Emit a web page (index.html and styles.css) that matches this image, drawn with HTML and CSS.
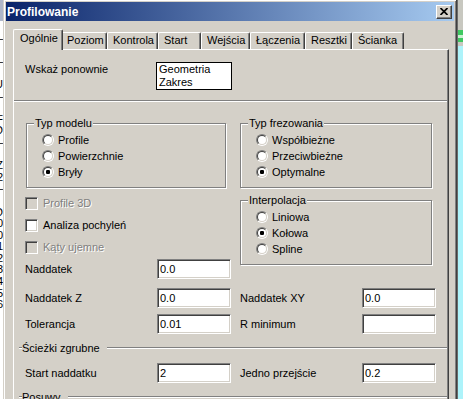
FILE: index.html
```html
<!DOCTYPE html>
<html lang="pl">
<head>
<meta charset="utf-8">
<title>Profilowanie</title>
<link rel="stylesheet" href="styles.css">
</head>
<body>
<div class="screen">
  <div class="strip-left">
    <div class="sl-top"></div>
    <div class="sl-text">
      <div class="sl-inner">&nbsp;<br>–<br>&nbsp;<br>–<br>&nbsp;<br>U<br>–<br>&nbsp;<br>F<br>D<br>–<br>&nbsp;<br>Z<br>2<br>–<br>&nbsp;<br>D<br>0<br>0<br>1<br>2<br>3<br>4<br>5<br>6</div>
    </div>
  </div>
  <div class="window">
    <div class="titlebar">
      <span class="title">Profilowanie</span>
      <span class="close"><svg width="8" height="7" viewBox="0 0 8 7"><path d="M0.5 0 L7.5 7 M7.5 0 L0.5 7" stroke="#000" stroke-width="1.7" fill="none"/></svg></span>
    </div>
    <div class="tabs">
      <div class="tab active t-ogolnie">Ogólnie</div>
      <div class="tab t-poziom">Poziom</div>
      <div class="tab t-kontrola">Kontrola</div>
      <div class="tab t-start">Start</div>
      <div class="tab t-wejscia">Wejścia</div>
      <div class="tab t-laczenia">Łączenia</div>
      <div class="tab t-resztki">Resztki</div>
      <div class="tab t-scianka">Ścianka</div>
    </div>
    <div class="panel">
      <div class="row-top">
        <span class="lbl-wide">Wskaż ponownie</span>
        <div class="listbox"><div>Geometria</div><div>Zakres</div></div>
      </div>
      <div class="hsep"></div>
      <div class="cols">
        <div class="col-left">
          <div class="group group-left">
            <div class="legend">Typ modelu</div>
            <div class="opts">
              <div class="opt"><span class="radio"></span><span>Profile</span></div>
              <div class="opt"><span class="radio"></span><span>Powierzchnie</span></div>
              <div class="opt"><span class="radio on"></span><span>Bryły</span></div>
            </div>
          </div>
          <div class="checks">
            <div class="chk disabled"><span class="box"></span><span class="txt">Profile 3D</span></div>
            <div class="chk"><span class="box"></span><span class="txt">Analiza pochyleń</span></div>
            <div class="chk disabled"><span class="box"></span><span class="txt">Kąty ujemne</span></div>
          </div>
          <div class="frow">
            <span>Naddatek</span><span class="edit">0.0</span>
          </div>
        </div>
        <div class="col-right">
          <div class="group group-right">
            <div class="legend">Typ frezowania</div>
            <div class="opts">
              <div class="opt"><span class="radio"></span><span>Współbieżne</span></div>
              <div class="opt"><span class="radio"></span><span>Przeciwbieżne</span></div>
              <div class="opt"><span class="radio on"></span><span>Optymalne</span></div>
            </div>
          </div>
          <div class="group group-right group-interp">
            <div class="legend">Interpolacja</div>
            <div class="opts">
              <div class="opt"><span class="radio"></span><span>Liniowa</span></div>
              <div class="opt"><span class="radio on"></span><span>Kołowa</span></div>
              <div class="opt"><span class="radio"></span><span>Spline</span></div>
            </div>
          </div>
        </div>
      </div>
      <div class="fields">
        <span>Naddatek Z</span><span class="edit">0.0</span>
        <span class="lbl-r">Naddatek XY</span><span class="edit">0.0</span>
        <span>Tolerancja</span><span class="edit">0.01</span>
        <span class="lbl-r">R minimum</span><span class="edit"></span>
      </div>
      <div class="section"><span>Ścieżki zgrubne</span></div>
      <div class="fields fields-after">
        <span>Start naddatku</span><span class="edit">2</span>
        <span class="lbl-r">Jedno przejście</span><span class="edit">0.2</span>
      </div>
      <div class="section"><span>Posuwy</span></div>
      <div class="fields fields-after">
        <span>Posuw</span><span class="edit">100</span>
        <span class="lbl-r">Wejście</span><span class="edit">50</span>
      </div>
    </div>
  </div>
  <div class="strip-right">
    <div class="sr-top"></div>
    <div class="sr-green"></div>
    <div class="sr-cyan"></div>
  </div>
</div>
</body>
</html>
```
FILE: styles.css
```css
html, body {
  margin: 0;
  padding: 0;
}
body {
  width: 463px;
  height: 399px;
  overflow: hidden;
  background: #fff;
  font-family: "Liberation Sans", Arial, sans-serif;
  font-size: 11px;
  color: #000;
}
.screen {
  display: flex;
  height: 399px;
  overflow: hidden;
}

/* left background strip */
.strip-left {
  width: 3px;
  flex: none;
  display: flex;
  flex-direction: column;
  background: #fff;
  overflow: hidden;
}
.sl-top {
  height: 21px;
  background: #aeb6c8;
}
.sl-text {
  width: 3px;
  overflow: hidden;
}
.sl-inner {
  width: 20px;
  margin-left: -17px;
  text-align: right;
  line-height: 11.6px;
  font-size: 11px;
}

/* right background strip */
.strip-right {
  width: 6px;
  flex: none;
  display: flex;
  flex-direction: column;
  border-left: 1px solid #6b6b6b;
  box-sizing: border-box;
}
.sr-top {
  height: 26px;
  background: #c8c8c0;
}
.sr-green {
  height: 20px;
  background: linear-gradient(#c8c8c0 0 20%, #3ec860 20% 45%, #c8f0d0 45% 60%, #3ec860 60% 80%, #c8c8c0 80%);
}
.sr-cyan {
  flex: 1;
  background: #adf3fa;
}

/* window */
.window {
  flex: none;
  width: 454px;
  height: 420px;
  margin-top: -1px;
  box-sizing: border-box;
  background: #d4d0c8;
  border: 1px solid;
  border-color: #d4d0c8 #404040 #404040 #d4d0c8;
  box-shadow: inset 1px 1px #fff, inset -1px -1px #808080;
  padding: 2px;
  display: flex;
  flex-direction: column;
}
.titlebar {
  height: 19px;
  flex: none;
  display: flex;
  align-items: center;
  background: linear-gradient(to right, #0a246a, #a6caf0);
  padding: 0 2px 0 1px;
}
.title {
  color: #fff;
  font-weight: bold;
  font-size: 12px;
}
.close {
  margin-left: auto;
  width: 16px;
  height: 14px;
  box-sizing: border-box;
  background: #d4d0c8;
  border: 1px solid;
  border-color: #fff #404040 #404040 #fff;
  box-shadow: inset -1px -1px #808080;
  display: flex;
  align-items: center;
  justify-content: center;
}
.close svg {
  display: block;
}

/* tabs */
.tabs {
  display: flex;
  align-items: flex-end;
  height: 20px;
  margin: 8px 0 0 9px;
  flex: none;
}
.tab {
  flex: none;
  height: 17px;
  box-sizing: border-box;
  padding: 1px 0 0 5px;
  border-top: 1px solid #fff;
  border-left: 1px solid #fff;
  border-right: 1px solid #404040;
  box-shadow: inset -1px 0 #808080;
  border-radius: 2px 2px 0 0;
  line-height: 13px;
  white-space: nowrap;
  overflow: hidden;
}
.t-ogolnie { width: 46px; }
.t-poziom { width: 46px; }
.t-kontrola { width: 51px; }
.t-start { width: 43px; }
.t-wejscia { width: 49px; }
.t-laczenia { width: 55px; }
.t-resztki { width: 47px; }
.t-scianka { width: 52px; }
.tab.active {
  width: 50px;
  height: 21px;
  margin: 0 -2px -1px;
  padding: 2px 0 0 6px;
  position: relative;
  z-index: 1;
  background: #d4d0c8;
}

/* panel */
.panel {
  flex: 1;
  margin: 0 5px 0 7px;
  border: 1px solid;
  border-color: #fff #404040 #404040 #fff;
  box-shadow: inset -1px -1px #808080;
  padding: 0 1px 0 11px;
}
.row-top {
  display: flex;
  align-items: baseline;
  margin-top: 12px;
}
.lbl-wide {
  width: 131px;
  flex: none;
}
.listbox {
  width: 76px;
  box-sizing: border-box;
  border: 1px solid #000;
  background: #fff;
  padding: 0 2px;
  line-height: 13px;
}
.hsep {
  height: 0;
  border-top: 1px solid #808080;
  border-bottom: 1px solid #fff;
  margin: 10px 0 0 -11px;
}

.cols {
  display: grid;
  grid-template-columns: 215px 1fr;
  align-items: start;
  margin-top: 21px;
}
.group {
  box-sizing: border-box;
  border: 1px solid #808080;
  box-shadow: 1px 1px #fff, inset 1px 1px #fff;
  padding: 0 0 7px 15px;
}
.group-left {
  width: 200px;
  margin-left: 1px;
}
.group-right {
  width: 192px;
}
.group-interp {
  margin-top: 12px;
}
.legend {
  width: max-content;
  margin: -7px 0 0 -8px;
  padding: 0 1px;
  background: #d4d0c8;
  line-height: 13px;
}
.opts {
  margin-top: 2px;
}
.opt {
  display: flex;
  align-items: center;
  gap: 4px;
  height: 16px;
}
.radio {
  width: 12px;
  height: 12px;
  box-sizing: border-box;
  border-radius: 50%;
  border: 1px solid;
  border-color: #808080 #fff #fff #808080;
  flex: none;
}
.radio::before {
  content: "";
  display: block;
  width: 10px;
  height: 10px;
  box-sizing: border-box;
  border-radius: 50%;
  border: 1px solid;
  border-color: #404040 #d4d0c8 #d4d0c8 #404040;
  background: #fff;
}
.radio.on::before {
  background: radial-gradient(circle at 50% 50%, #000 0 2px, #fff 2.4px);
}

.checks {
  margin-top: 4px;
}
.chk {
  display: flex;
  align-items: center;
  gap: 5px;
  height: 22px;
}
.box {
  width: 13px;
  height: 13px;
  box-sizing: border-box;
  flex: none;
  border: 1px solid;
  border-color: #808080 #fff #fff #808080;
  box-shadow: inset 1px 1px #404040, inset -1px -1px #d4d0c8;
  background: #fff;
}
.chk.disabled .box {
  background: #d4d0c8;
}
.chk.disabled .txt {
  color: #808080;
  text-shadow: 1px 1px 0 #fff;
}

.frow {
  display: grid;
  grid-template-columns: 132px 74px;
  align-items: center;
  margin-top: 1px;
}
.edit {
  display: block;
  height: 20px;
  box-sizing: border-box;
  border: 1px solid;
  border-color: #808080 #fff #fff #808080;
  box-shadow: inset 1px 1px #404040, inset -1px -1px #d4d0c8;
  background: #fff;
  padding: 0 2px;
  line-height: 18px;
}

.fields {
  display: grid;
  grid-template-columns: 132px 74px 131px 74px;
  row-gap: 6px;
  align-items: center;
  margin-top: 9px;
}
.fields-after {
  margin-top: 8px;
}
.lbl-r {
  padding-left: 9px;
}

.section {
  display: flex;
  align-items: flex-start;
  height: 14px;
  line-height: 14px;
  margin: 7px 0 0 -6px;
}
.section::before,
.section::after {
  content: "";
  height: 0;
  border-top: 1px solid #808080;
  border-bottom: 1px solid #fff;
  margin-top: 6px;
}
.section::before {
  width: 3px;
}
.section::after {
  flex: 1;
  margin-left: 7px;
}
```
